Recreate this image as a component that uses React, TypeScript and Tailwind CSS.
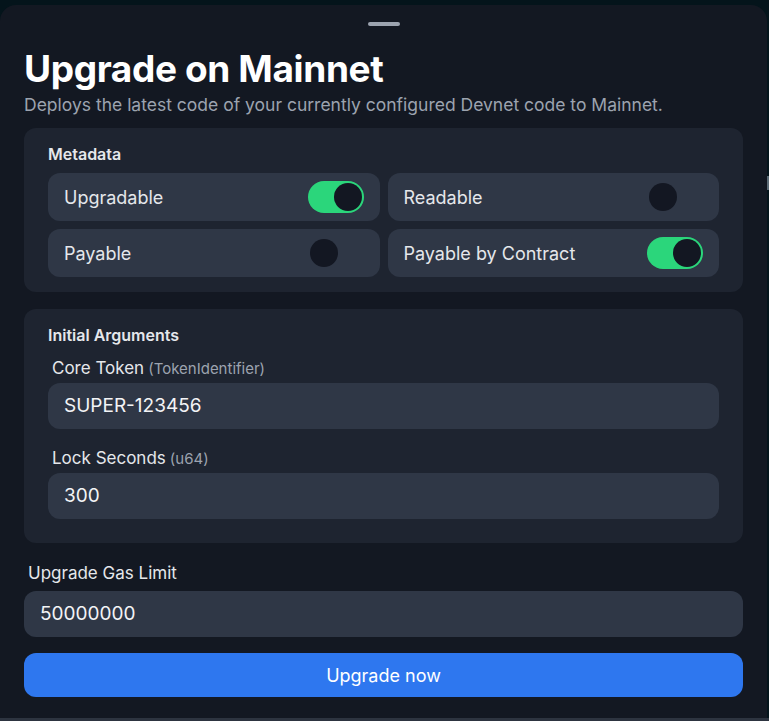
import React from "react";

function Toggle({ on }: { on: boolean }) {
  return (
    <div
      className={
        "relative h-8 w-14 rounded-full " +
        (on ? "bg-[#2bd67b]" : "bg-transparent")
      }
    >
      <div
        className={
          "absolute top-[2px] h-7 w-7 rounded-full bg-[#131722] " +
          (on ? "left-[26px]" : "left-[2px]")
        }
      />
    </div>
  );
}

function ToggleRow({ label, on }: { label: string; on: boolean }) {
  return (
    <div className="flex h-12 items-center justify-between rounded-xl bg-[#2f3746] pl-4 pr-4">
      <span className="text-[18px] text-[#e5e7eb]">{label}</span>
      <Toggle on={on} />
    </div>
  );
}

function Field({
  label,
  type,
  value,
  gap,
}: {
  label: string;
  type?: string;
  value: string;
  gap: string;
}) {
  return (
    <div className="flex flex-col">
      <div className="px-1 text-[17px] leading-6 text-[#e5e7eb]">
        {label}
        {type && (
          <span className="ml-1 text-[15px] text-[#9ca3af]">({type})</span>
        )}
      </div>
      <div
        className={
          "flex h-[46px] items-center rounded-xl bg-[#2f3746] px-4 text-[19px] text-[#f3f4f6] " +
          gap
        }
      >
        {value}
      </div>
    </div>
  );
}

export default function App() {
  return (
    <div
      className="relative h-[721px] w-[769px] overflow-hidden bg-[#04141b]"
      style={{ fontFamily: "Inter, 'Noto Sans', sans-serif" }}
    >
      <div className="absolute right-0 top-[176px] h-[14px] w-[2px] bg-[#5b6b76]" />
      <div className="ml-0 mt-[5px] flex h-[713px] w-[767px] flex-col rounded-t-2xl bg-[#131822] px-6">
        <div className="mx-auto mt-[17px] h-[4px] w-[32px] rounded-full bg-[#9ca3af]" />
        <h1 className="mt-[21px] text-[37px] font-bold leading-[44px] tracking-[-0.01em] text-white">
          Upgrade on Mainnet
        </h1>
        <p className="mt-[2px] text-[17.5px] leading-6 text-[#9ca3af]">
          Deploys the latest code of your currently configured Devnet code to
          Mainnet.
        </p>

        <div className="mt-[11px] rounded-xl bg-[#1e2430] px-6 pb-[15px] pt-[14px]">
          <div className="text-[16px] font-semibold leading-6 text-[#e5e7eb]">
            Metadata
          </div>
          <div className="mt-[7px] grid grid-cols-2 gap-2">
            <ToggleRow label="Upgradable" on={true} />
            <ToggleRow label="Readable" on={false} />
            <ToggleRow label="Payable" on={false} />
            <ToggleRow label="Payable by Contract" on={true} />
          </div>
        </div>

        <div className="mt-[17px] flex flex-col rounded-xl bg-[#1e2430] px-6 pb-6 pt-[14px]">
          <div className="text-[16px] font-semibold leading-6 text-[#e5e7eb]">
            Initial Arguments
          </div>
          <div className="mt-[9px] flex flex-col gap-[17px]">
            <Field label="Core Token" type="TokenIdentifier" value="SUPER-123456" gap="mt-[2px]" />
            <Field label="Lock Seconds" type="u64" value="300" gap="mt-[2px]" />
          </div>
        </div>

        <div className="mt-[18px]">
          <Field label="Upgrade Gas Limit" value="50000000" gap="mt-[6px]" />
        </div>

        <button className="mt-4 flex h-11 w-full items-center justify-center rounded-xl bg-[#2e77ef] text-[18px] text-white">
          Upgrade now
        </button>
      </div>
      <div className="h-[3px] w-full bg-[#2d3440]" />
    </div>
  );
}
